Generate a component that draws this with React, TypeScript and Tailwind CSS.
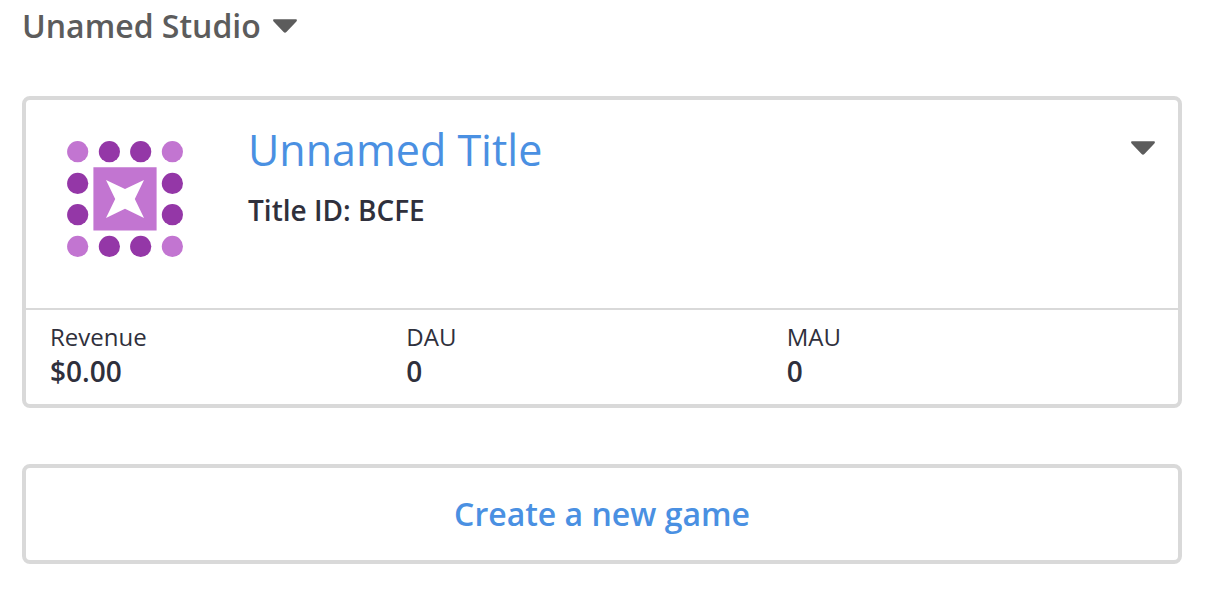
function Caret() {
  return (
    <svg width="24" height="14" viewBox="0 0 24 14" fill="currentColor" aria-hidden="true">
      <path d="M1.2 0.2H22.8C24 0.2 24.3 1.6 23.4 2.4L13.4 13C12.6 13.9 11.4 13.9 10.6 13L0.6 2.4C-0.3 1.6 0 0.2 1.2 0.2Z" />
    </svg>
  );
}

function Stat({ label, value }: { label: string; value: string }) {
  return (
    <div>
      <dt className="text-2xl leading-8">{label}</dt>
      <dd className="text-[28px] leading-9 font-semibold">{value}</dd>
    </div>
  );
}

function TitleLogo() {
  return (
    <svg className="mt-[41px] shrink-0" width="116" height="116" viewBox="0 0 116 116" aria-hidden="true">
      <g fill="#c275d1">
        <circle cx="10.7" cy="10.7" r="10.6" />
        <circle cx="105.4" cy="10.7" r="10.6" />
        <circle cx="10.7" cy="105.4" r="10.6" />
        <circle cx="105.4" cy="105.4" r="10.6" />
        <path d="M26.4 26.3h63.2v63.2H26.4z" />
      </g>
      <g fill="#9437a7">
        <circle cx="42.4" cy="10.7" r="10.6" />
        <circle cx="73.7" cy="10.7" r="10.6" />
        <circle cx="42.4" cy="105.4" r="10.6" />
        <circle cx="73.7" cy="105.4" r="10.6" />
        <circle cx="10.7" cy="42.4" r="10.6" />
        <circle cx="10.7" cy="73.7" r="10.6" />
        <circle cx="105.4" cy="42.4" r="10.6" />
        <circle cx="105.4" cy="73.7" r="10.6" />
      </g>
      <path fill="#fff" d="M39 39L58 48L77 39L67.8 58L77 77L58 67.8L39 77L48.2 58Z" />
    </svg>
  );
}

export default function App() {
  return (
    <main className="min-h-screen bg-white pt-2 pr-8 pl-[22px] font-['Open_Sans',sans-serif] text-[#2f303c]">
      <button type="button" className="flex h-9 items-center gap-3 text-[32px] leading-9 font-semibold text-[#5c5c5c]">
        Unamed Studio
        <Caret />
      </button>
      <section className="mt-[52px] rounded-lg border-4 border-[#d9d9d9]">
        <div className="flex h-[208px] items-start pr-[23px] pl-[41px]">
          <TitleLogo />
          <div className="ml-[65px] flex-1 pt-6">
            <h1 className="text-[43px] leading-[52px]">
              <a href="#title" className="text-[#4a90e2]">Unnamed Title</a>
            </h1>
            <p className="mt-4 text-[28px] leading-9 font-semibold">Title ID: BCFE</p>
          </div>
          <button type="button" aria-label="Title options" className="mt-[41px] text-[#5c5c5c]">
            <Caret />
          </button>
        </div>
        <dl className="grid h-24 grid-cols-[356fr_380fr_391fr] border-t-2 border-[#d9d9d9] pt-[11px] pl-6">
          <Stat label="Revenue" value="$0.00" />
          <Stat label="DAU" value="0" />
          <Stat label="MAU" value="0" />
        </dl>
      </section>
      <button type="button" className="mt-14 flex h-[100px] w-full items-center justify-center rounded-lg border-4 border-[#d9d9d9] text-[32px] font-semibold text-[#4a90e2]">
        Create a new game
      </button>
    </main>
  );
}
